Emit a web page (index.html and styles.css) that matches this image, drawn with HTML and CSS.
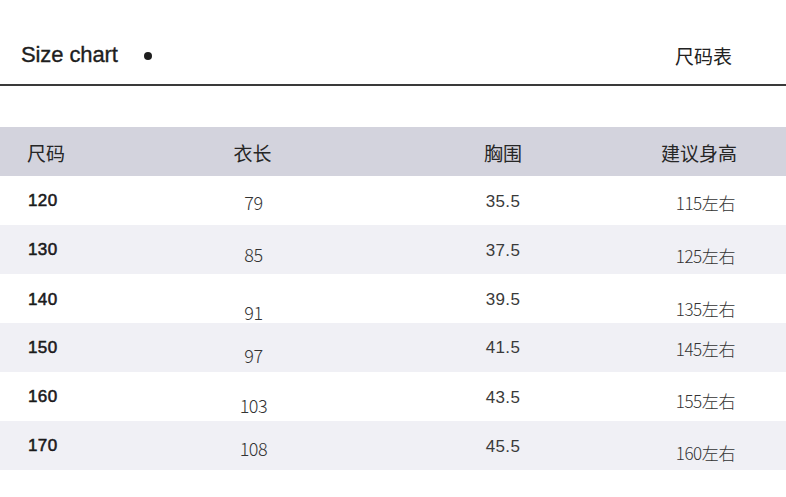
FILE: index.html
```html
<!DOCTYPE html>
<html lang="zh">
<head>
<meta charset="utf-8">
<title>Size chart</title>
<link rel="stylesheet" href="styles.css">
</head>
<body>
<header class="top">
  <div class="title"><span class="en">Size chart</span><span class="dot"></span></div>
  <div class="zh-title">尺码表</div>
</header>
<section class="chart">
  <div class="row head">
    <div class="c1">尺码</div>
    <div class="c2">衣长</div>
    <div class="c3">胸围</div>
    <div class="c4">建议身高</div>
  </div>
  <div class="row">
    <div class="c1 size">120</div>
    <div class="c2 thin dy3">79</div>
    <div class="c3 num dy2">35.5</div>
    <div class="c4 thin dy4">115左右</div>
  </div>
  <div class="row alt">
    <div class="c1 size">130</div>
    <div class="c2 thin dy8">85</div>
    <div class="c3 num dy3">37.5</div>
    <div class="c4 thin dy11">125左右</div>
  </div>
  <div class="row">
    <div class="c1 size">140</div>
    <div class="c2 thin dy25">91</div>
    <div class="c3 num dy1">39.5</div>
    <div class="c4 thin dy17">135左右</div>
  </div>
  <div class="row alt">
    <div class="c1 size">150</div>
    <div class="c2 thin dy15">97</div>
    <div class="c3 num dy1">41.5</div>
    <div class="c4 thin dy1">145左右</div>
  </div>
  <div class="row">
    <div class="c1 size">160</div>
    <div class="c2 thin dy17">103</div>
    <div class="c3 num dy3">43.5</div>
    <div class="c4 thin dy7">155左右</div>
  </div>
  <div class="row alt">
    <div class="c1 size">170</div>
    <div class="c2 thin dy5">108</div>
    <div class="c3 num dy3">45.5</div>
    <div class="c4 thin dy13">160左右</div>
  </div>
</section>
</body>
</html>
```

FILE: styles.css
```css
html, body {
  margin: 0;
  padding: 0;
  background: #ffffff;
}

body {
  width: 786px;
  height: 497px;
  overflow: hidden;
  font-family: "Noto Sans CJK SC", "Liberation Sans", sans-serif;
  color: #222;
}

.top {
  height: 86px;
  border-bottom: 2px solid #3a3a3a;
  display: flex;
  align-items: center;
  justify-content: space-between;
  padding: 26px 54px 0 21px;
  box-sizing: border-box;
}

.title {
  display: flex;
  align-items: center;
}

.en {
  font-family: "Liberation Sans", Arial, sans-serif;
  font-size: 22px;
  color: #1e1e1e;
  letter-spacing: -0.1px;
  -webkit-text-stroke: 0.35px #1e1e1e;
}

.dot {
  width: 8px;
  height: 8px;
  border-radius: 50%;
  background: #1e1e1e;
  margin-left: 26px;
  margin-top: 2px;
}

.zh-title {
  font-size: 19px;
  color: #222;
  margin-top: 1px;
}

.chart {
  margin-top: 41px;
}

.row {
  display: grid;
  grid-template-columns: 160px 185px 316px 1fr;
  height: 49px;
  align-items: center;
  background: #ffffff;
  white-space: nowrap;
}

.row.alt {
  background: #f0f0f5;
}

.row.head {
  background: #d3d3dd;
  font-size: 19px;
  color: #262626;
}

.row.head > div {
  padding-top: 1px;
}

.c1 {
  padding-left: 27px;
}

.c2, .c3 {
  text-align: center;
}

.c4 {
  text-align: right;
  padding-right: 51px;
}

.row.head .c4 {
  padding-right: 50px;
}

.size {
  font-family: "Liberation Sans", Arial, sans-serif;
  font-size: 17px;
  letter-spacing: 0.4px;
  color: #1a1a1a;
  padding-left: 28px;
  -webkit-text-stroke: 0.55px #1a1a1a;
}

.num {
  font-family: "Liberation Sans", Arial, sans-serif;
  font-size: 17px;
  letter-spacing: 0.4px;
  color: #3a3a3a;
}

.thin {
  font-family: "Noto Sans CJK SC", sans-serif;
  font-weight: 300;
  font-size: 17px;
  color: #333;
  letter-spacing: -0.4px;
}

.c2.thin {
  font-size: 18px;
  padding-left: 2px;
}

.dy1 { padding-top: 1px; }
.dy2 { padding-top: 2px; }
.dy3 { padding-top: 3px; }
.dy4 { padding-top: 4px; }
.dy5 { padding-top: 5px; }
.dy7 { padding-top: 7px; }
.dy8 { padding-top: 8px; }
.dy11 { padding-top: 11px; }
.dy13 { padding-top: 13px; }
.dy15 { padding-top: 15px; }
.dy17 { padding-top: 17px; }
.dy25 { padding-top: 25px; }
```
